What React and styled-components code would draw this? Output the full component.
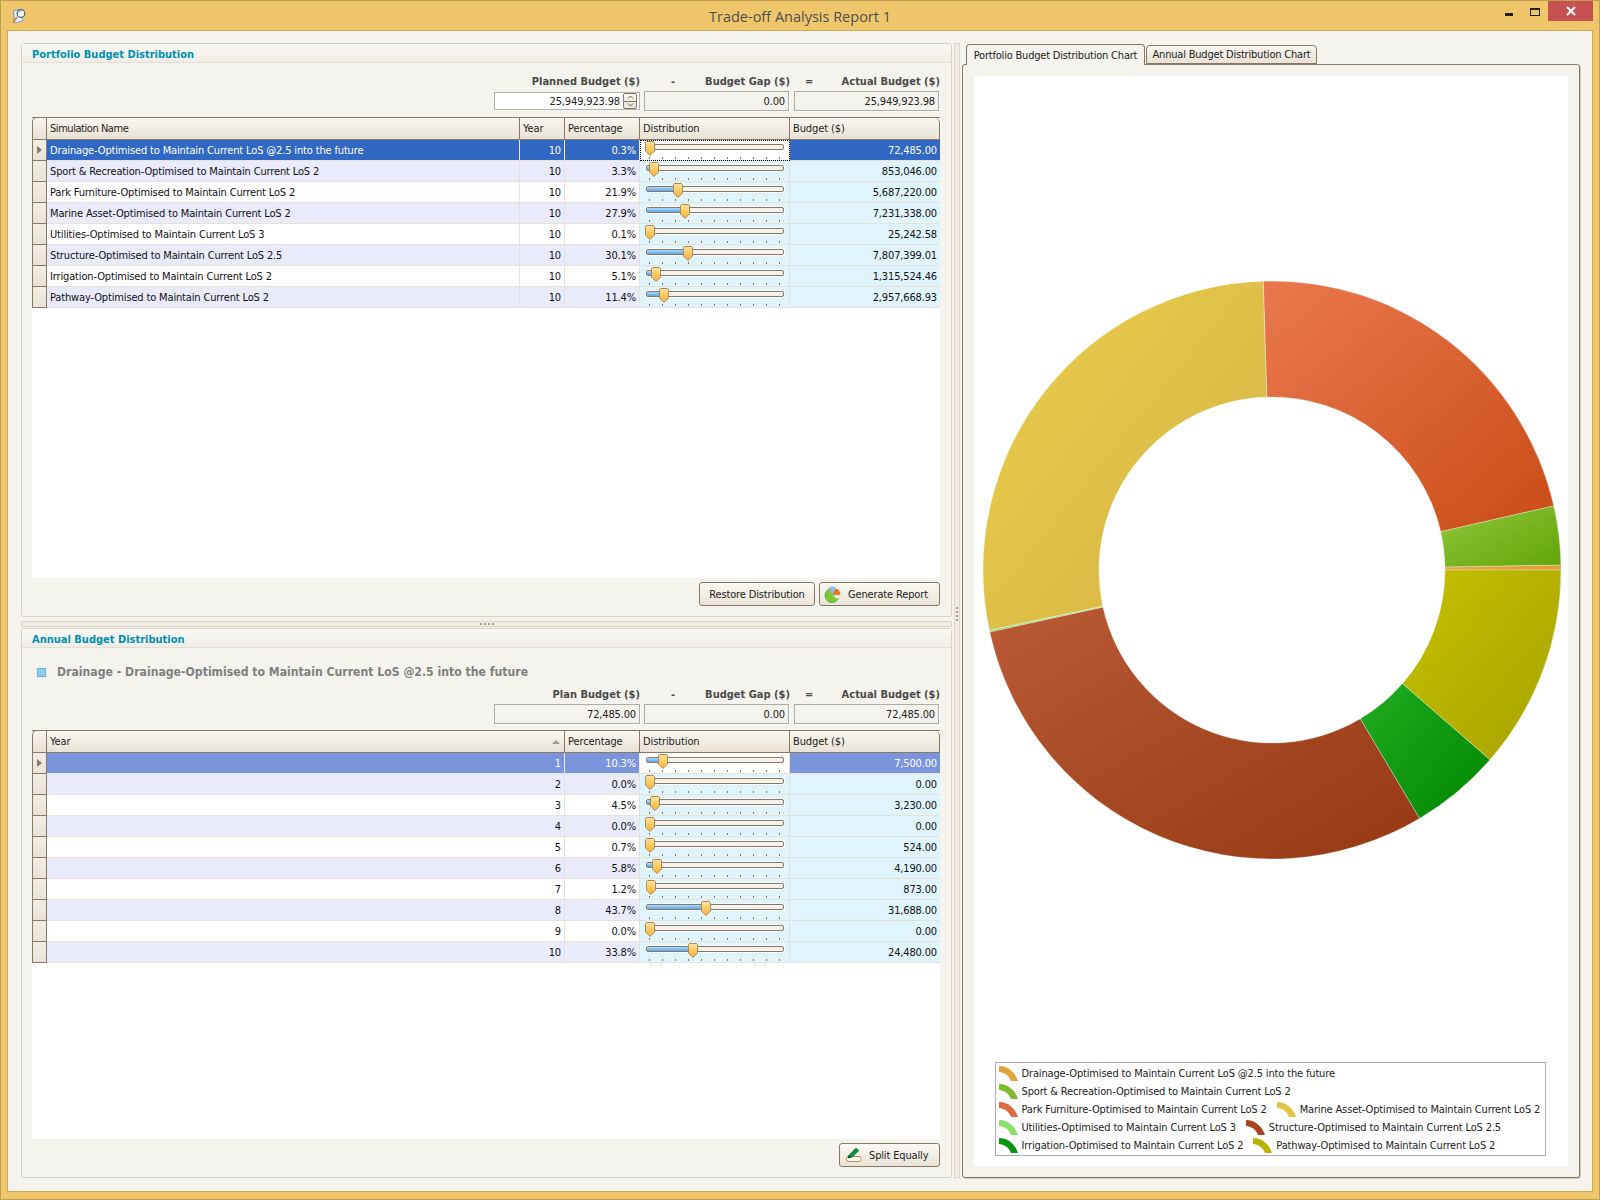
import React from "react";
import styled, { createGlobalStyle } from "styled-components";

const FONT = `"DejaVu Sans Condensed", "DejaVu Sans", sans-serif`;
const LINE = "#8b7766";
const CELL_LINE = "#e8e2d6";
const PAPER = "#f5f3ee";

const Global = createGlobalStyle`
  html, body { margin: 0; padding: 0; background: #fff; }
  * { box-sizing: border-box; }
  body { font: 11px ${FONT}; color: #111; letter-spacing: -0.15px; }
`;

const Win = styled.div`
  width: 1600px; height: 1200px; display: flex; flex-direction: column;
  background: #efc76a; border: 1px solid #bfa052; padding: 0 6px 7px;
`;
const TitleBar = styled.header`
  position: relative; height: 29px; flex: none; display: flex; align-items: center; justify-content: center;
  font: 14.5px "Open Sans", sans-serif; letter-spacing: 0; color: #4f4f4f; padding-top: 1px;
`;
const AppIcon = styled.svg`position: absolute; left: 5px; top: 7px;`;
const WinControls = styled.div`
  position: absolute; right: 0; top: 0; height: 20px; display: flex; align-items: stretch;
`;
const WinBtn = styled.div`
  width: ${p => p.$w}px; display: flex; align-items: center; justify-content: center;
  background: ${p => p.$close ? "#c75050" : "transparent"}; color: #fff;
`;
const MinGlyph = styled.i`display: block; width: 8px; height: 3px; background: #222; margin-top: 7px;`;
const MaxGlyph = styled.i`display: block; width: 10px; height: 8px; border: 1px solid #222; border-top-width: 2px; margin-top: 1px;`;

const Body = styled.main`
  flex: 1; min-height: 0; display: flex; background: ${PAPER}; border: 1px solid #cba94f; padding: 12px 12px 13px 13px;
`;
const LeftCol = styled.div`width: 931px; flex: none; display: flex; flex-direction: column;`;
const VSplit = styled.div`
  width: 6px; margin: 0 2px; flex: none; background: #efebe2; border: 1px solid #dcd6ca; display: flex; flex-direction: column;
  align-items: center; justify-content: center; gap: 2px; padding-top: 6px;
  i { display: block; width: 2px; height: 2px; background: #a89c8c; }
`;
const HSplit = styled.div`
  height: 6px; margin: 4px 0 1px; flex: none; background: #efebe2; border: 1px solid #dcd6ca; display: flex;
  align-items: center; justify-content: center; gap: 2px;
  i { display: block; width: 2px; height: 2px; background: #a89c8c; }
`;
const Panel = styled.section`
  display: flex; flex-direction: column; min-height: 0; border: 1px solid #d8d2c6; border-radius: 3px; background: ${PAPER};
  height: ${p => p.$h ? p.$h + "px" : "auto"}; flex: ${p => p.$h ? "none" : "1"};
`;
const PanelHead = styled.h2`
  margin: 0; height: 19px; flex: none; padding: 2px 10px 0; display: flex; align-items: center;
  font: bold 11px ${FONT}; letter-spacing: 0; color: #0090b0;
  background: linear-gradient(#f9f8f5, #f0ede6); border-bottom: 1px solid #e4dfd5;
`;
const PanelBody = styled.div`
  flex: 1; min-height: 0; display: flex; flex-direction: column; padding: ${p => p.$top}px 11px 10px 10px;
`;
const Subtitle = styled.div`
  height: 16px; flex: none; margin-bottom: 7px; display: flex; align-items: center; gap: 11px; padding-left: 5px;
  font: bold 12.15px ${FONT}; letter-spacing: 0; color: #808080;
`;
const Square = styled.i`
  display: block; width: 9px; height: 9px; background: #8fcbe8; border: 1px solid #73b4d4; box-shadow: 0 0 0 1px #e8eef0;
`;
const Summary = styled.div`display: grid; grid-template-columns: 146px 150px 150px; justify-content: end; flex: none;`;
const SummaryCol = styled.div`display: flex; flex-direction: column;`;
const SummaryLabel = styled.div`
  height: 14px; margin-bottom: 3px; display: flex; justify-content: ${p => p.$op ? "space-between" : "flex-end"};
  padding-left: ${p => p.$pad || 0}px; align-items: center; font: bold 11px ${FONT}; letter-spacing: 0; color: #4a4a4a;
`;
const ValueField = styled.div`
  height: 20px; margin: 0 ${p => p.$flush ? 0 : 1}px 0 ${p => p.$flush ? 0 : 4}px; display: flex; align-items: center; justify-content: flex-end; padding-right: 3px;
  background: ${PAPER}; border: 1px solid #b0aca4; box-shadow: 1px 1px 0 #fff; color: #222;
`;
const InputField = styled.div`
  height: 18px; margin-top: 1px; display: flex; align-items: center; justify-content: flex-end; gap: 3px; padding-right: 2px;
  background: #fff; border: 1px solid #b8b3aa; color: #222;
`;
const Spinner = styled.div`
  width: 14px; height: 16px; display: flex; flex-direction: column; border: 1px solid ${LINE}; border-radius: 2px;
  background: linear-gradient(#f8f6f1, #e8e2d6); overflow: hidden;
`;
const SpinPart = styled.span`
  flex: 1; display: flex; align-items: center; justify-content: center;
  border-bottom: ${p => p.$first ? `1px solid ${LINE}` : "none"};
`;
const Table = styled.div`
  flex: 1; min-height: 0; margin-top: 6px; background: #fff; display: flex; flex-direction: column;
`;
const HeadRow = styled.div`
  display: grid; grid-template-columns: ${p => p.$cols}; height: 23px; flex: none;
  border-top: 1px solid ${LINE}; border-bottom: 1px solid ${LINE};
`;
const HeadCorner = styled.div`
  margin-top: -1px; border: 1px solid ${LINE}; border-bottom: none; border-top-left-radius: 5px;
  background: linear-gradient(#f8f6f1, #e8e2d5);
`;
const HeadCell = styled.div`
  display: flex; align-items: center; justify-content: space-between; padding: 0 4px 0 3px; color: #222;
  letter-spacing: ${p => p.$tight ? "-0.45px" : "-0.1px"};
  background: linear-gradient(#f9f7f2, #e8e2d5);
  border-right: 1px solid ${LINE};
  border-top-right-radius: ${p => p.$last ? "5px" : "0"};
`;
const SortMark = styled.i`
  display: block; width: 0; height: 0; border-left: 4px solid transparent; border-right: 4px solid transparent;
  border-bottom: 4px solid #9a9a9a;
`;
const Row = styled.div`display: grid; grid-template-columns: ${p => p.$cols}; height: 21px; flex: none;`;
const RowHandle = styled.div`
  display: flex; align-items: center; justify-content: center;
  border: 1px solid ${LINE}; border-top: none; background: linear-gradient(#f1eee5, #e8e3d7);
`;
const Arrow = styled.i`
  display: block; width: 0; height: 0; border-top: 4px solid transparent; border-bottom: 4px solid transparent;
  border-left: 5px solid #8a7a68;
`;
const Cell = styled.div`
  display: flex; align-items: center; white-space: nowrap; overflow: hidden;
  justify-content: ${p => p.$right ? "flex-end" : "flex-start"};
  padding: ${p => p.$right ? `0 ${p.$pad || 3}px 0 0` : "0 0 0 3px"};
  border-bottom: 1px solid ${CELL_LINE}; border-right: 1px solid ${p => p.$sel ? "#e8edf8" : CELL_LINE};
  color: ${p => p.$sel ? "#fff" : "#111"};
  background: ${p => p.$sel || (p.$odd ? "#e9eafc" : "#fff")};
`;
const BudgetCell = styled(Cell)`
  background: ${p => p.$sel || "#e0f4fd"};
  border-right: none;
`;
const SliderCell = styled.div`
  position: relative; border-bottom: 1px solid ${CELL_LINE}; border-right: 1px solid ${CELL_LINE};
  background: ${p => p.$active ? "#fff" : "#e0f4fd"};
  outline: ${p => p.$focus ? "1px dotted #000" : "none"}; outline-offset: -1px;
  &::before {
    content: ""; position: absolute; left: 5px; top: 3px; width: 140px; height: 8px; background: rgba(255,255,255,.75); border-radius: 2px;
  }
`;
const Track = styled.div`
  position: absolute; left: 6px; top: 4px; width: 138px; height: 6px; background: #f6f3ec; border: 1px solid ${LINE}; border-radius: 2px;
`;
const Fill = styled.div`
  height: 100%; background: linear-gradient(#aedaf8, #58a6ea);
`;
const Thumb = styled.svg`position: absolute; top: 1px; margin-left: -5px;`;
const Ticks = styled.div`
  position: absolute; left: 9px; top: 17px; width: 131px; height: 2px; display: flex; justify-content: space-between;
  i { display: block; width: 1px; height: 2px; background: ${LINE}; }
`;
const Footer = styled.div`
  flex: none; display: flex; justify-content: flex-end; gap: 4px; padding-top: 4px;
`;
const Btn = styled.button`
  width: ${p => p.$w}px; height: 24px; display: flex; align-items: center; justify-content: ${p => p.$icon ? "flex-start" : "center"};
  gap: ${p => p.$gap || 0}px; padding: 0 0 0 ${p => p.$icon || 0}px; border: 1px solid ${LINE}; border-radius: 3px;
  background: linear-gradient(#fbf9f5, #e9e4d8); font: 11px ${FONT}; letter-spacing: -0.15px; color: #222;
`;
const RightCol = styled.div`flex: 1; min-width: 0; display: flex; flex-direction: column; padding-top: 1px;`;
const Tabs = styled.div`display: flex; align-items: flex-end; padding-left: 4px; height: 21px; flex: none; gap: 1px; margin-bottom: -1px; position: relative; z-index: 1;`;
const Tab = styled.div`
  height: ${p => p.$on ? 21 : 19}px; width: ${p => p.$w}px; display: flex; align-items: center; justify-content: center;
  margin-bottom: ${p => p.$on ? 0 : 1}px; letter-spacing: -0.2px;
  border: 1px solid ${LINE}; border-bottom: ${p => p.$on ? "none" : `1px solid ${LINE}`}; border-radius: 4px 4px 0 0;
  background: ${p => p.$on ? PAPER : "linear-gradient(#f8f6f1, #e8e2d5)"}; color: #222;
`;
const TabPage = styled.div`
  flex: 1; min-height: 0; padding: 11px; background: ${PAPER}; border: 1px solid ${LINE}; border-radius: 3px;
  box-shadow: 1px 1px 0 #cfc8bb; display: flex;
`;
const ChartArea = styled.div`
  flex: 1; background: #fff; display: flex; flex-direction: column; align-items: center; padding: 204px 0 10px;
`;
const Donut = styled.svg`display: block; flex: none; margin-left: 2px;`;
const Legend = styled.div`
  margin: auto 2px 0 0; width: 551px; height: 94px; flex: none; padding: 1px 0 0 3px; border: 1px solid #ababab; background: #fff;
  display: flex; flex-direction: column;
`;
const LegendRow = styled.div`height: 18px; display: flex; gap: 10px;`;
const LegendItem = styled.div`display: flex; align-items: center; gap: 4px; white-space: nowrap; color: #222;`;

const C_BUDGET = [
  ["Drainage-Optimised to Maintain Current LoS @2.5 into the future", "10", "0.3%", 0.3, "72,485.00", 72485, "d"],
  ["Sport & Recreation-Optimised to Maintain Current LoS 2", "10", "3.3%", 3.3, "853,046.00", 853046, "s"],
  ["Park Furniture-Optimised to Maintain Current LoS 2", "10", "21.9%", 21.9, "5,687,220.00", 5687220, "p"],
  ["Marine Asset-Optimised to Maintain Current LoS 2", "10", "27.9%", 27.9, "7,231,338.00", 7231338, "m"],
  ["Utilities-Optimised to Maintain Current LoS 3", "10", "0.1%", 0.1, "25,242.58", 25242.58, "u"],
  ["Structure-Optimised to Maintain Current LoS 2.5", "10", "30.1%", 30.1, "7,807,399.01", 7807399.01, "t"],
  ["Irrigation-Optimised to Maintain Current LoS 2", "10", "5.1%", 5.1, "1,315,524.46", 1315524.46, "i"],
  ["Pathway-Optimised to Maintain Current LoS 2", "10", "11.4%", 11.4, "2,957,668.93", 2957668.93, "w"],
];
const ANNUAL = [
  ["1", "10.3%", 10.3, "7,500.00"], ["2", "0.0%", 0, "0.00"], ["3", "4.5%", 4.5, "3,230.00"], ["4", "0.0%", 0, "0.00"],
  ["5", "0.7%", 0.7, "524.00"], ["6", "5.8%", 5.8, "4,190.00"], ["7", "1.2%", 1.2, "873.00"], ["8", "43.7%", 43.7, "31,688.00"],
  ["9", "0.0%", 0, "0.00"], ["10", "33.8%", 33.8, "24,480.00"],
];
const COLORS = {
  d: ["#e8ab42", "#dc9a30", "#e3a33b"],
  s: ["#8fc83c", "#62a408", "#7fb92c"],
  p: ["#ea784e", "#c84c16", "#e0693f"],
  m: ["#ebcf4c", "#d2b244", "#e3c345"],
  u: ["#98e878", "#80d860", "#8ee06c"],
  t: ["#ba5a36", "#963814", "#a84422"],
  i: ["#20ac20", "#008600", "#0a9410"],
  w: ["#c6c000", "#a6a200", "#b8b300"],
};
const COLS1 = "15px 473px 45px 75px 150px 150px";
const COLS2 = "15px 518px 75px 150px 150px";

function slicePath(cx, cy, R, r, a0, a1) {
  const pt = (rad, a) => [cx + rad * Math.cos(a), cy - rad * Math.sin(a)].map(v => v.toFixed(2)).join(" ");
  const large = a1 - a0 > Math.PI ? 1 : 0;
  return `M${pt(R, a0)} A${R} ${R} 0 ${large} 0 ${pt(R, a1)} L${pt(r, a1)} A${r} ${r} 0 ${large} 1 ${pt(r, a0)} Z`;
}

function DonutChart() {
  const total = C_BUDGET.reduce((s, d) => s + d[5], 0);
  let a = 0;
  const slices = C_BUDGET.map(d => {
    const a0 = a;
    a += (d[5] / total) * Math.PI * 2;
    return { k: d[6], path: slicePath(290, 290, 289, 173, a0, a) };
  });
  return (
    <Donut width="580" height="580" viewBox="0 0 580 580">
      <defs>
        {slices.map(s => (
          <linearGradient key={s.k} id={`g-${s.k}`} x1="0" y1="0" x2="1" y2="1">
            <stop offset="0" stopColor={COLORS[s.k][0]} />
            <stop offset="1" stopColor={COLORS[s.k][1]} />
          </linearGradient>
        ))}
      </defs>
      {slices.map(s => (
        <path key={s.k} d={s.path} fill={`url(#g-${s.k})`} stroke="#ffffff" strokeOpacity="0.4" strokeWidth="0.8" />
      ))}
    </Donut>
  );
}

const Marker = ({ k }) => (
  <svg width="19" height="15" viewBox="0 0 19 15">
    <path d="M0 0 C9 0 16 6 19 15 L12 15 C10 10 6 6.5 0 6 Z" fill={COLORS[k][2]} />
  </svg>
);

function Slider({ value, active, focus }) {
  const left = 9.5 + value * 1.29;
  return (
    <SliderCell $active={active} $focus={focus}>
      <Track><Fill style={{ width: `${Math.max(0, left - 7)}px` }} /></Track>
      <Ticks>{Array.from({ length: 11 }, (_, i) => <i key={i} />)}</Ticks>
      <Thumb style={{ left: `${left}px` }} width="10" height="15" viewBox="0 0 10 15">
        <defs>
          <linearGradient id="thumbFill" x1="0" y1="0" x2="0" y2="1">
            <stop offset="0" stopColor="#ffe39a" />
            <stop offset="1" stopColor="#f8b02e" />
          </linearGradient>
        </defs>
        <path d="M1.5 .5 H8.5 L9.5 1.5 V10 L5 14.5 L.5 10 V1.5 Z" fill="url(#thumbFill)" stroke="#a88a5a" />
      </Thumb>
    </SliderCell>
  );
}

const Chev = ({ up }) => (
  <svg width="7" height="4" viewBox="0 0 7 4"><path d={up ? "M1 3.5 L3.5 1 L6 3.5" : "M1 .5 L3.5 3 L6 .5"} fill="none" stroke="#6f5f50" /></svg>
);

const PieIcon = () => (
  <svg width="17" height="17" viewBox="0 0 17 17">
    <circle cx="8" cy="9.5" r="7" fill="#7cc83a" stroke="#5aa024" strokeWidth=".8" />
    <path d="M8 9 L5 1 A8 8 0 0 1 12 1.5 Z" fill="#9db4f0" />
    <path d="M8.5 8.5 L12.5 2.5 A8 8 0 0 1 16.5 8.5 Z" fill="#f26f1c" />
    <path d="M8.5 9.5 L16 9 A7 7 0 0 1 13.5 13 Z" fill="#f5f3ee" />
  </svg>
);
const PencilIcon = () => (
  <svg width="16" height="14" viewBox="0 0 16 14">
    <rect x=".5" y="8.5" width="14.5" height="5" rx="2" fill="#fff" stroke="#c8873a" />
    <path d="M2 10 L3 7 L10 0 L13 2.5 L6 9.5 Z" fill="#0f8f3c" stroke="#0b6e2d" strokeWidth=".5" />
    <path d="M2 10 L3 7 L5 9 Z" fill="#222" />
  </svg>
);
const AppGlyph = () => (
  <AppIcon width="15" height="16" viewBox="0 0 15 16">
    <path d="M1.5 3 L7.5 1.5 L10 3.5 L10.5 13 L2.5 15 Z" fill="#e4eefa" stroke="#6f93c4" strokeWidth=".9" />
    <path d="M5 9 L1 14.5" stroke="#c8873a" strokeWidth="1.8" />
    <circle cx="9" cy="5.5" r="3.8" fill="#ffffff" fillOpacity=".9" stroke="#3f5f78" strokeWidth="1.2" />
    <path d="M7 4.5 A2.4 2.4 0 0 1 9.5 3" fill="none" stroke="#8fc4ee" />
  </AppIcon>
);
const Dots = () => <><i /><i /><i /><i /></>;

function SummaryBlock({ first, firstField, gap, actual }) {
  return (
    <Summary>
      <SummaryCol>
        <SummaryLabel>{first}</SummaryLabel>
        {firstField}
      </SummaryCol>
      <SummaryCol>
        <SummaryLabel $op $pad={31}><span>-</span><span>Budget Gap ($)</span></SummaryLabel>
        <ValueField>{gap}</ValueField>
      </SummaryCol>
      <SummaryCol>
        <SummaryLabel $op $pad={15}><span>=</span><span>Actual Budget ($)</span></SummaryLabel>
        <ValueField>{actual}</ValueField>
      </SummaryCol>
    </Summary>
  );
}

const LEGEND = [
  [["d", 0]], [["s", 1]], [["p", 2], ["m", 3]], [["u", 4], ["t", 5]], [["i", 6], ["w", 7]],
];

export default function App() {
  return (
    <>
      <Global />
      <Win>
        <TitleBar>
          <AppGlyph />
          Trade-off Analysis Report 1
          <WinControls>
            <WinBtn $w={26}><MinGlyph /></WinBtn>
            <WinBtn $w={26}><MaxGlyph /></WinBtn>
            <WinBtn $w={45} $close>
              <svg width="10" height="10" viewBox="0 0 10 10"><path d="M1 1 L9 9 M9 1 L1 9" stroke="#fff" strokeWidth="2" /></svg>
            </WinBtn>
          </WinControls>
        </TitleBar>
        <Body>
          <LeftCol>
            <Panel $h={574}>
              <PanelHead>Portfolio Budget Distribution</PanelHead>
              <PanelBody $top={11}>
                <SummaryBlock
                  first="Planned Budget ($)"
                  firstField={
                    <InputField>
                      25,949,923.98
                      <Spinner>
                        <SpinPart $first><Chev up /></SpinPart>
                        <SpinPart><Chev /></SpinPart>
                      </Spinner>
                    </InputField>
                  }
                  gap="0.00"
                  actual="25,949,923.98"
                />
                <Table>
                  <HeadRow $cols={COLS1}>
                    <HeadCorner />
                    <HeadCell $tight>Simulation Name</HeadCell>
                    <HeadCell>Year</HeadCell>
                    <HeadCell>Percentage</HeadCell>
                    <HeadCell>Distribution</HeadCell>
                    <HeadCell $last>Budget ($)</HeadCell>
                  </HeadRow>
                  {C_BUDGET.map((d, i) => {
                    const sel = i === 0 ? "#3068c4" : undefined;
                    return (
                      <Row key={d[0]} $cols={COLS1}>
                        <RowHandle>{i === 0 && <Arrow />}</RowHandle>
                        <Cell $sel={sel} $odd={i % 2 === 1}>{d[0]}</Cell>
                        <Cell $sel={sel} $odd={i % 2 === 1} $right>{d[1]}</Cell>
                        <Cell $sel={sel} $odd={i % 2 === 1} $right>{d[2]}</Cell>
                        <Slider value={d[3]} active={i === 0} focus={i === 0} />
                        <BudgetCell $sel={sel} $right $pad={3}>{d[4]}</BudgetCell>
                      </Row>
                    );
                  })}
                </Table>
                <Footer>
                  <Btn $w={116}>Restore Distribution</Btn>
                  <Btn $w={121} $icon={4} $gap={7}><PieIcon />Generate Report</Btn>
                </Footer>
              </PanelBody>
            </Panel>
            <HSplit><Dots /></HSplit>
            <Panel>
              <PanelHead>Annual Budget Distribution</PanelHead>
              <PanelBody $top={16}>
                <Subtitle><Square />Drainage - Drainage-Optimised to Maintain Current LoS @2.5 into the future</Subtitle>
                <SummaryBlock
                  first="Plan Budget ($)"
                  firstField={<ValueField $flush>72,485.00</ValueField>}
                  gap="0.00"
                  actual="72,485.00"
                />
                <Table>
                  <HeadRow $cols={COLS2}>
                    <HeadCorner />
                    <HeadCell>Year<SortMark /></HeadCell>
                    <HeadCell>Percentage</HeadCell>
                    <HeadCell>Distribution</HeadCell>
                    <HeadCell $last>Budget ($)</HeadCell>
                  </HeadRow>
                  {ANNUAL.map((d, i) => {
                    const sel = i === 0 ? "#7b95dd" : undefined;
                    return (
                      <Row key={d[0]} $cols={COLS2}>
                        <RowHandle>{i === 0 && <Arrow />}</RowHandle>
                        <Cell $sel={sel} $odd={i % 2 === 1} $right>{d[0]}</Cell>
                        <Cell $sel={sel} $odd={i % 2 === 1} $right>{d[1]}</Cell>
                        <Slider value={d[2]} active={i === 0} />
                        <BudgetCell $sel={sel} $right $pad={3}>{d[3]}</BudgetCell>
                      </Row>
                    );
                  })}
                </Table>
                <Footer>
                  <Btn $w={101} $icon={6} $gap={7}><PencilIcon />Split Equally</Btn>
                </Footer>
              </PanelBody>
            </Panel>
          </LeftCol>
          <VSplit><Dots /></VSplit>
          <RightCol>
            <Tabs>
              <Tab $on $w={179}>Portfolio Budget Distribution Chart</Tab>
              <Tab $w={171}>Annual Budget Distribution Chart</Tab>
            </Tabs>
            <TabPage>
              <ChartArea>
                <DonutChart />
                <Legend>
                  {LEGEND.map((row, i) => (
                    <LegendRow key={i}>
                      {row.map(([k, idx]) => (
                        <LegendItem key={k}><Marker k={k} />{C_BUDGET[idx][0]}</LegendItem>
                      ))}
                    </LegendRow>
                  ))}
                </Legend>
              </ChartArea>
            </TabPage>
          </RightCol>
        </Body>
      </Win>
    </>
  );
}
